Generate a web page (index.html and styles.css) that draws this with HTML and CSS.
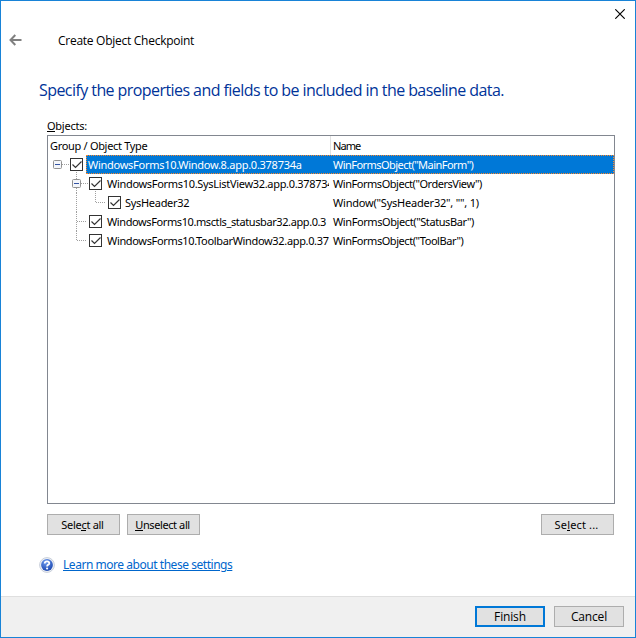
FILE: index.html
```html
<!DOCTYPE html>
<html lang="en">
<head>
<meta charset="utf-8">
<title>Create Object Checkpoint</title>
<link rel="stylesheet" href="styles.css">
</head>
<body>
<div class="window">
  <button class="close" aria-label="Close"><svg width="10" height="10" viewBox="0 0 10 10"><path d="M.3.3l9.4 9.4M9.7.3L.3 9.7" stroke="#000" stroke-width="1.15"/></svg></button>
  <header class="titlebar">
    <svg class="back" width="13" height="12" viewBox="0 0 13 12"><path d="M6.300 1L1.500 6l4.800 5M1.500 6H12.500" fill="none" stroke="#808080" stroke-width="2"/></svg>
    <span class="title">Create Object Checkpoint</span>
  </header>
  <main class="page">
    <h1><span class="headline">Specify the properties and fields to be included in the baseline data.</span></h1>
    <div class="label"><u>O</u>bjects:</div>
    <div class="list">
      <div class="row head"><div class="type"><span class="h1t">Group / Object Type</span></div><div class="name"><span class="h2t">Name</span></div></div>
      <div class="row selected">
        <div class="type"><svg class="tree" width="38" height="19"><path class="dots" d="M14 9.500h7M28.500 17v2"/><g class="box"><rect x="5.500" y="5.500" width="8" height="8" rx="1"/><path d="M7 9.500h5"/></g><g class="check"><rect x="22.500" y="3.500" width="12" height="12"/><path d="M24.500 9.500l3 3 6-6"/></g></svg><span class="t1">WindowsForms10.Window.8.app.0.378734a</span></div>
        <div class="name"><span class="n1">WinFormsObject("MainForm")</span></div>
      </div>
      <div class="row">
        <div class="type"><svg class="tree" width="57" height="19"><path class="dots" d="M28.500 0v19M33 9.500h7M47.500 17v2"/><g class="box"><rect x="24.500" y="5.500" width="8" height="8" rx="1"/><path d="M26 9.500h5"/></g><g class="check"><rect x="41.500" y="3.500" width="12" height="12"/><path d="M43.500 9.500l3 3 6-6"/></g></svg><span class="t2">WindowsForms10.SysListView32.app.0.378734</span></div>
        <div class="name"><span class="n2">WinFormsObject("OrdersView")</span></div>
      </div>
      <div class="row">
        <div class="type"><svg class="tree" width="75" height="19"><path class="dots" d="M28.500 0v19M47.500 0v10M48 9.500h10"/><g class="check"><rect x="60.500" y="3.500" width="12" height="12"/><path d="M62.500 9.500l3 3 6-6"/></g></svg><span class="t3">SysHeader32</span></div>
        <div class="name"><span class="n3">Window("SysHeader32", "", 1)</span></div>
      </div>
      <div class="row">
        <div class="type"><svg class="tree" width="57" height="19"><path class="dots" d="M28.500 0v19M29 9.500h10"/><g class="check"><rect x="41.500" y="3.500" width="12" height="12"/><path d="M43.500 9.500l3 3 6-6"/></g></svg><span class="t4">WindowsForms10.msctls_statusbar32.app.0.3</span></div>
        <div class="name"><span class="n4">WinFormsObject("StatusBar")</span></div>
      </div>
      <div class="row">
        <div class="type"><svg class="tree" width="57" height="19"><path class="dots" d="M28.500 0v10M29 9.500h10"/><g class="check"><rect x="41.500" y="3.500" width="12" height="12"/><path d="M43.500 9.500l3 3 6-6"/></g></svg><span class="t5">WindowsForms10.ToolbarWindow32.app.0.37</span></div>
        <div class="name"><span class="n5">WinFormsObject("ToolBar")</span></div>
      </div>
    </div>
    <div class="actions">
      <button class="btn"><span class="b1">Sele<u>c</u>t all</span></button>
      <button class="btn"><span class="b2"><u>U</u>nselect all</span></button>
      <button class="btn pick"><span class="b3">Se<u>l</u>ect ...</span></button>
    </div>
    <div class="help">
      <svg width="16" height="16" viewBox="0 0 16 16"><defs><radialGradient id="ball" cx=".4" cy=".25" r=".8"><stop offset="0" stop-color="#6f9df0"/><stop offset="1" stop-color="#1743ad"/></radialGradient></defs><circle cx="8" cy="8" r="7.400" fill="#eef1f6" stroke="#c3cad6" stroke-width=".9"/><circle cx="8" cy="8" r="5.900" fill="url(#ball)"/><path d="M5.700 6.500Q5.800 4.400 8 4.400t2.300 1.900Q10.300 7.300 9 7.900 8.100 8.400 8.100 9.500" fill="none" stroke="#fff" stroke-width="1.800"/><circle cx="8.100" cy="11.500" r="1.100" fill="#fff"/></svg>
      <a class="link" href="#">Learn more about these settings</a>
    </div>
  </main>
  <footer class="footer">
    <button class="cmd primary"><span class="f1">Finish</span></button>
    <button class="cmd"><span class="f2">Cancel</span></button>
  </footer>
</div>
</body>
</html>
```
FILE: styles.css
```css
* { box-sizing: border-box; }
body { margin: 0; font-family: "Noto Sans", sans-serif; color: #000; }
button { font: inherit; color: inherit; padding: 0; margin: 0; }
span, .label, .link { white-space: nowrap; }
svg { display: block; flex: none; }
u { text-decoration: none; border-bottom: 1px solid currentColor; display: inline-block; line-height: 11px; }
.window { width: 636px; height: 638px; border: 1px solid #1883d7; background: #fff; display: flex; flex-direction: column; position: relative; }
.close { position: absolute; right: 9px; top: 7px; width: 12px; height: 12px; display: grid; place-items: center; border: 0; background: none; }
.titlebar { height: 78px; padding: 0 0 0 8px; display: flex; align-items: center; }
.back { margin-right: 36px; }
.title { font-family: "Open Sans", sans-serif; font-size: 12px; line-height: 18px; letter-spacing: -.27px; padding-top: 2px; }
.page { flex: 1; padding: 0 20px 0 46px; display: flex; flex-direction: column; }
h1 { margin: 0 0 0 -8px; height: 22px; font: 16px/22px "Open Sans", sans-serif; color: #003399; letter-spacing: -.57px; }
.label { margin-top: 17px; height: 17px; font-size: 11px; line-height: 16px; letter-spacing: -.25px; }
.list { height: 369px; border: 1px solid #828790; font-size: 11px; line-height: 19px; }
.row { display: flex; height: 19px; }
.type { width: 282px; padding-right: 1px; display: flex; overflow: hidden; }
.type > span { flex: 1; min-width: 0; overflow: hidden; padding-left: 2px; }
.name { flex: 1; padding-left: 3px; overflow: hidden; }
.head .type { width: 283px; border-right: 1px solid #e0e0e0; }
.head .name { padding-left: 2px; }
.selected { color: #fff; background: linear-gradient(90deg, #fff 38px, #0078d7 38px); position: relative; }
.selected::after { content: ""; position: absolute; inset: 0 0 0 38px; border: 1px dotted #ff8728; }
.h1t { letter-spacing: -.31px; }
.h2t { letter-spacing: -.9px; }
.t1 { letter-spacing: -.27px; }
.t2 { letter-spacing: -.31px; }
.t3 { letter-spacing: -.3px; }
.t4 { letter-spacing: -.4px; }
.t5 { letter-spacing: -.34px; }
.n1 { letter-spacing: -.54px; }
.n2 { letter-spacing: -.46px; }
.n3 { letter-spacing: -.21px; }
.n4 { letter-spacing: -.41px; }
.n5 { letter-spacing: -.45px; }
.dots { fill: none; stroke: #a0a0a0; stroke-dasharray: 1 1; }
.box { fill: #f4f6fa; stroke: #919191; }
.box path { stroke: #3454a4; }
.check { fill: #fff; stroke: #333; }
.check path { fill: none; stroke-width: 1.2; }
.actions { display: flex; gap: 7px; margin: 10px 1px 0 0; }
.btn { width: 73px; height: 21px; border: 1px solid #adadad; background: #e1e1e1; font-size: 11px; line-height: 17px; }
.btn span { display: block; margin-top: -1px; }
.b1 { letter-spacing: -.3px; padding-right: 2px; }
.b2 { letter-spacing: -.4px; padding-right: 2px; }
.b3 { letter-spacing: .15px; padding-right: 2px; }
.pick { margin-left: auto; }
.help { margin: 20px 0 0 -8px; display: flex; gap: 8px; height: 20px; align-items: center; }
.link { font-size: 12px; line-height: 18px; color: #0066cc; text-decoration: underline; letter-spacing: -.46px; }
.footer { height: 41px; border-top: 1px solid #dfdfdf; background: #f0f0f0; padding: 9px 11px 0 0; display: flex; justify-content: flex-end; gap: 9px; }
.cmd { width: 70px; height: 21px; border: 1px solid #adadad; background: #e1e1e1; font-family: "Open Sans", sans-serif; font-size: 12px; line-height: 17px; letter-spacing: -.15px; }
.primary { border: 2px solid #0078d7; }
```
